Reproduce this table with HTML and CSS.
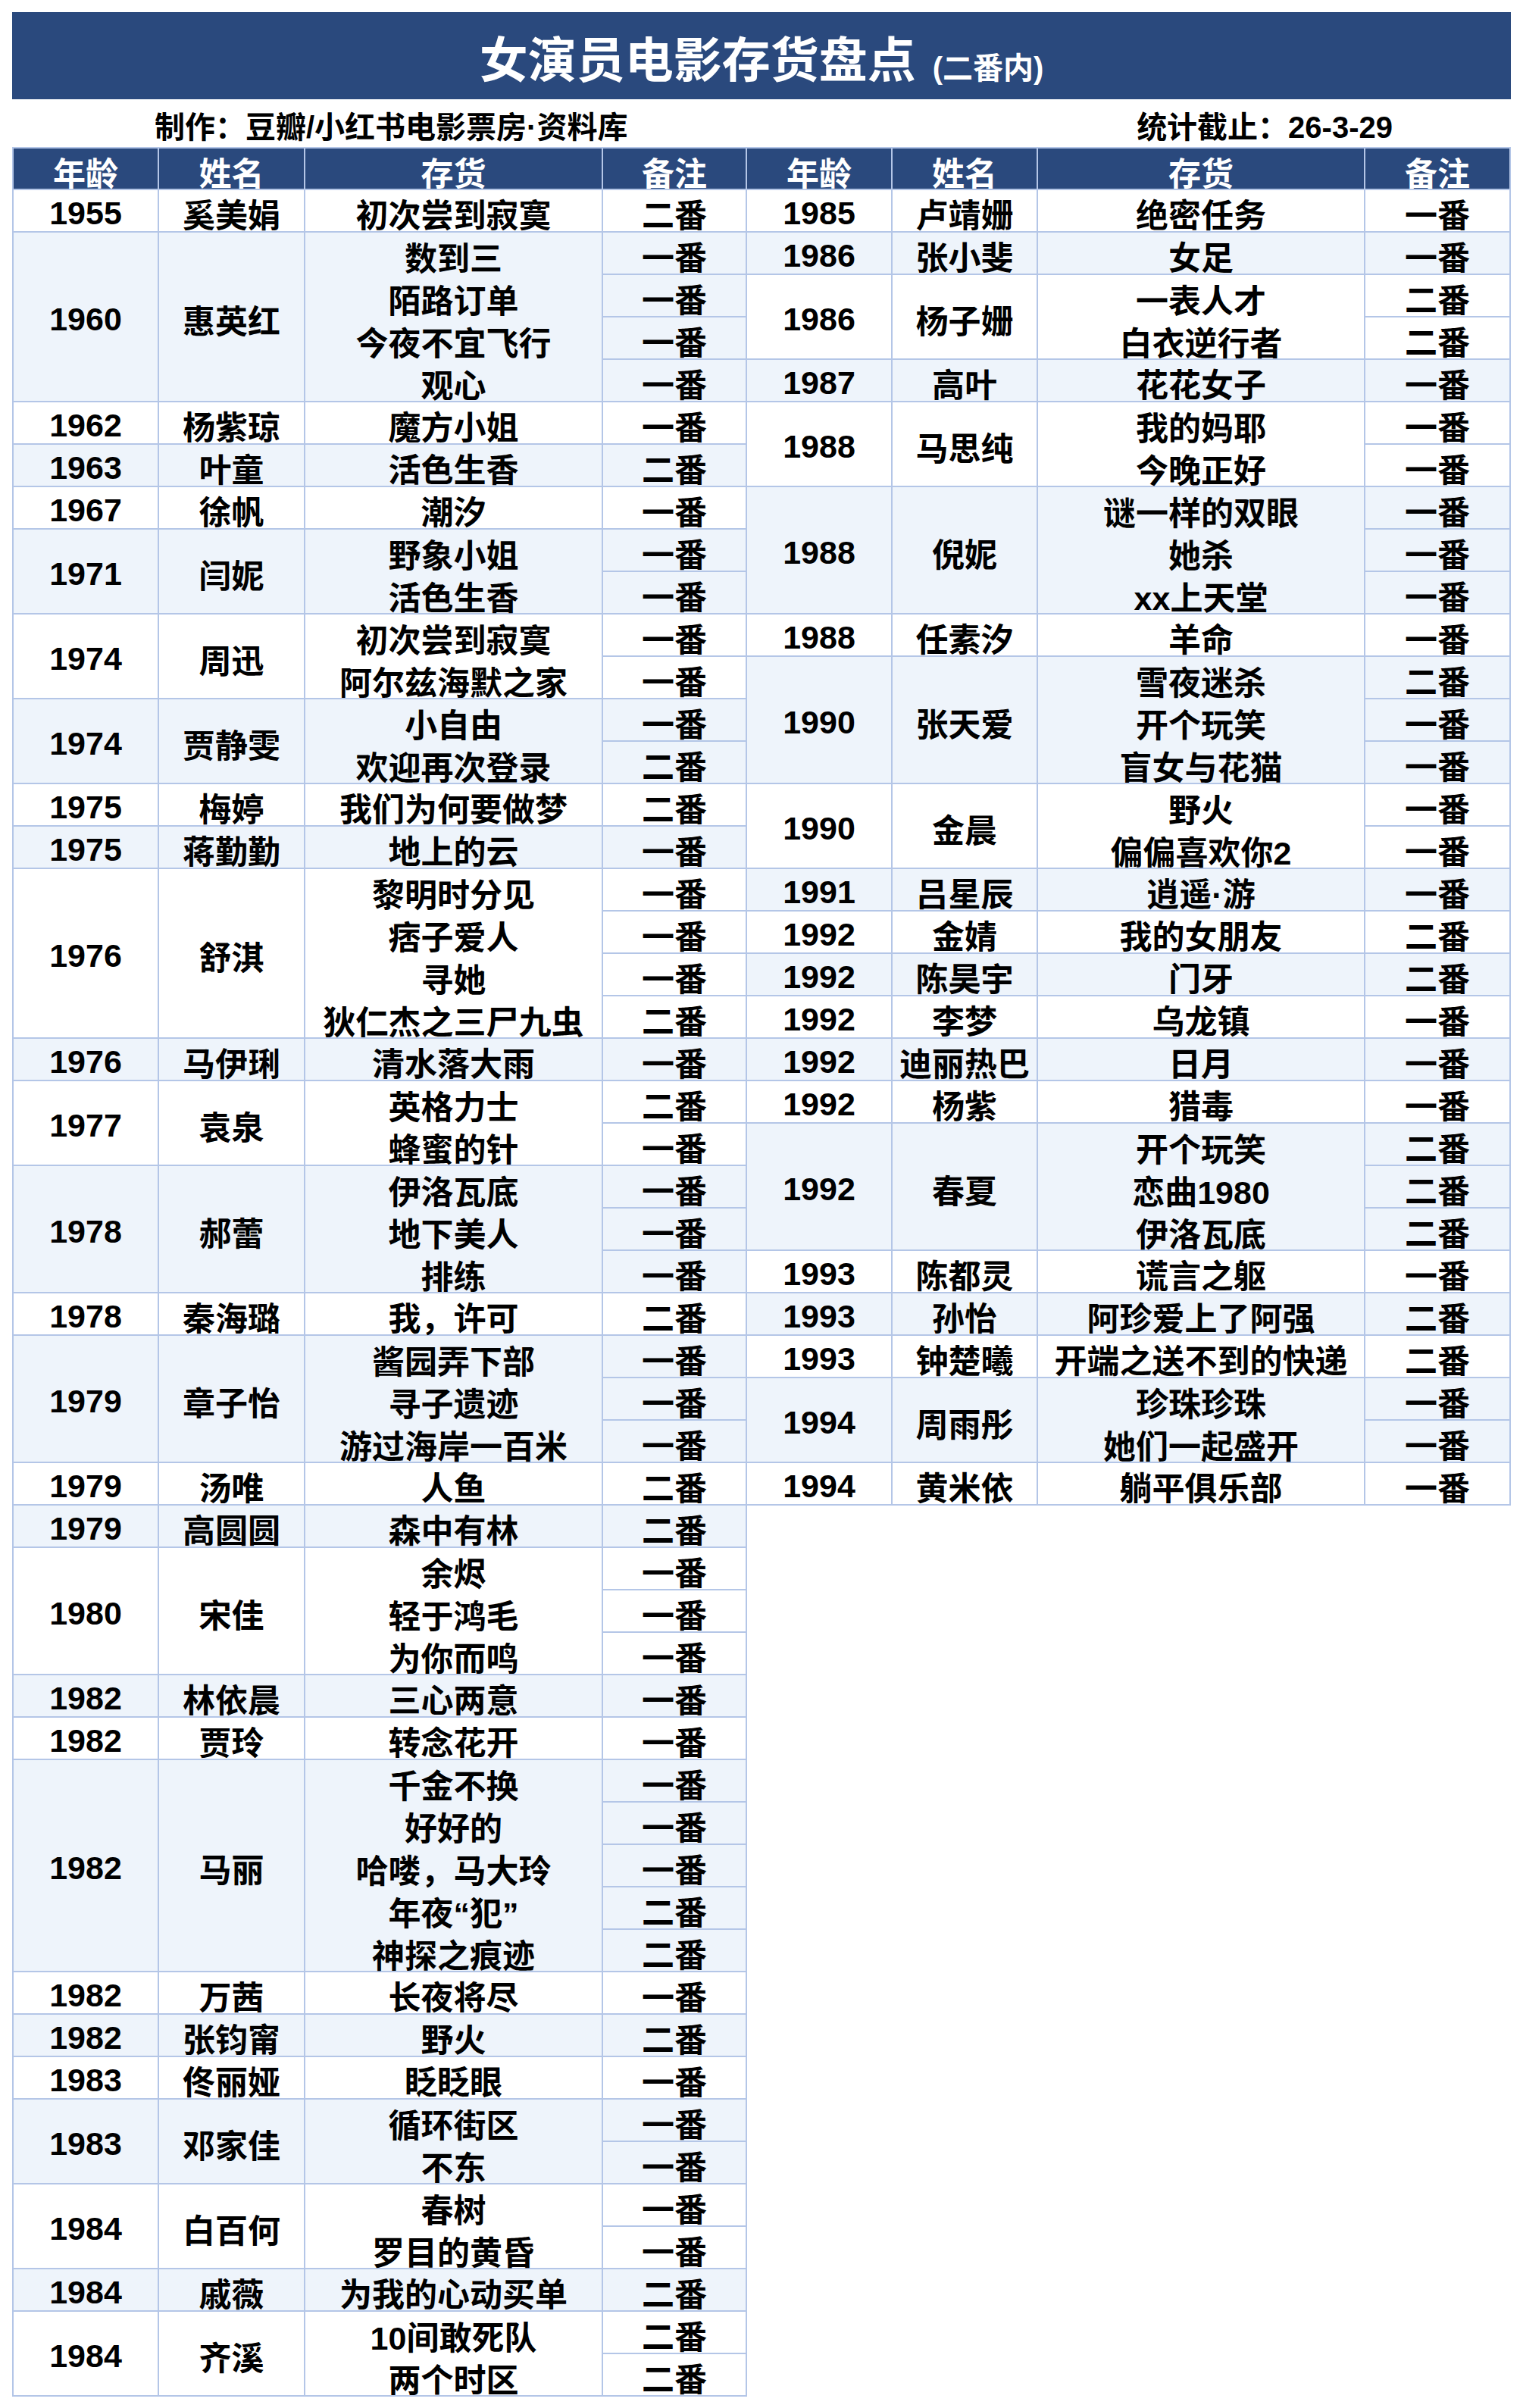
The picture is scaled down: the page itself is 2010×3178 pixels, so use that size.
FILE: index.html
```html
<!DOCTYPE html>
<html lang="zh-CN">
<head>
<meta charset="utf-8">
<title>女演员电影存货盘点</title>
<link rel="stylesheet" href="styles.css">
</head>
<body>
<div class="page">
  <div class="banner"><span class="title">女演员电影存货盘点</span><span class="title-note">(二番内)</span></div>
  <div class="sub"><span>制作：豆瓣/小红书电影票房·资料库</span><span>统计截止：26-3-29</span></div>
  <div class="tables">
    <div class="tbl left">
      <div class="cell hd">年龄</div><div class="cell hd">姓名</div><div class="cell hd">存货</div><div class="cell hd">备注</div>

      <div class="cell age">1955</div><div class="cell name">奚美娟</div><div class="cell film">初次尝到寂寞</div><div class="cell rem">二番</div>

      <div class="cell age alt r4">1960</div><div class="cell name alt r4">惠英红</div><div class="cell film multi alt r4"><div class="ln">数到三</div><div class="ln">陌路订单</div><div class="ln">今夜不宜飞行</div><div class="ln">观心</div></div><div class="cell rem alt">一番</div><div class="cell rem alt">一番</div><div class="cell rem alt">一番</div><div class="cell rem alt">一番</div>

      <div class="cell age">1962</div><div class="cell name">杨紫琼</div><div class="cell film">魔方小姐</div><div class="cell rem">一番</div>

      <div class="cell age alt">1963</div><div class="cell name alt">叶童</div><div class="cell film alt">活色生香</div><div class="cell rem alt">二番</div>

      <div class="cell age">1967</div><div class="cell name">徐帆</div><div class="cell film">潮汐</div><div class="cell rem">一番</div>

      <div class="cell age alt r2">1971</div><div class="cell name alt r2">闫妮</div><div class="cell film multi alt r2"><div class="ln">野象小姐</div><div class="ln">活色生香</div></div><div class="cell rem alt">一番</div><div class="cell rem alt">一番</div>

      <div class="cell age r2">1974</div><div class="cell name r2">周迅</div><div class="cell film multi r2"><div class="ln">初次尝到寂寞</div><div class="ln">阿尔兹海默之家</div></div><div class="cell rem">一番</div><div class="cell rem">一番</div>

      <div class="cell age alt r2">1974</div><div class="cell name alt r2">贾静雯</div><div class="cell film multi alt r2"><div class="ln">小自由</div><div class="ln">欢迎再次登录</div></div><div class="cell rem alt">一番</div><div class="cell rem alt">二番</div>

      <div class="cell age">1975</div><div class="cell name">梅婷</div><div class="cell film">我们为何要做梦</div><div class="cell rem">二番</div>

      <div class="cell age alt">1975</div><div class="cell name alt">蒋勤勤</div><div class="cell film alt">地上的云</div><div class="cell rem alt">一番</div>

      <div class="cell age r4">1976</div><div class="cell name r4">舒淇</div><div class="cell film multi r4"><div class="ln">黎明时分见</div><div class="ln">痞子爱人</div><div class="ln">寻她</div><div class="ln">狄仁杰之三尸九虫</div></div><div class="cell rem">一番</div><div class="cell rem">一番</div><div class="cell rem">一番</div><div class="cell rem">二番</div>

      <div class="cell age alt">1976</div><div class="cell name alt">马伊琍</div><div class="cell film alt">清水落大雨</div><div class="cell rem alt">一番</div>

      <div class="cell age r2">1977</div><div class="cell name r2">袁泉</div><div class="cell film multi r2"><div class="ln">英格力士</div><div class="ln">蜂蜜的针</div></div><div class="cell rem">二番</div><div class="cell rem">一番</div>

      <div class="cell age alt r3">1978</div><div class="cell name alt r3">郝蕾</div><div class="cell film multi alt r3"><div class="ln">伊洛瓦底</div><div class="ln">地下美人</div><div class="ln">排练</div></div><div class="cell rem alt">一番</div><div class="cell rem alt">一番</div><div class="cell rem alt">一番</div>

      <div class="cell age">1978</div><div class="cell name">秦海璐</div><div class="cell film">我，许可</div><div class="cell rem">二番</div>

      <div class="cell age alt r3">1979</div><div class="cell name alt r3">章子怡</div><div class="cell film multi alt r3"><div class="ln">酱园弄下部</div><div class="ln">寻子遗迹</div><div class="ln">游过海岸一百米</div></div><div class="cell rem alt">一番</div><div class="cell rem alt">一番</div><div class="cell rem alt">一番</div>

      <div class="cell age">1979</div><div class="cell name">汤唯</div><div class="cell film">人鱼</div><div class="cell rem">二番</div>

      <div class="cell age alt">1979</div><div class="cell name alt">高圆圆</div><div class="cell film alt">森中有林</div><div class="cell rem alt">二番</div>

      <div class="cell age r3">1980</div><div class="cell name r3">宋佳</div><div class="cell film multi r3"><div class="ln">余烬</div><div class="ln">轻于鸿毛</div><div class="ln">为你而鸣</div></div><div class="cell rem">一番</div><div class="cell rem">一番</div><div class="cell rem">一番</div>

      <div class="cell age alt">1982</div><div class="cell name alt">林依晨</div><div class="cell film alt">三心两意</div><div class="cell rem alt">一番</div>

      <div class="cell age">1982</div><div class="cell name">贾玲</div><div class="cell film">转念花开</div><div class="cell rem">一番</div>

      <div class="cell age alt r5">1982</div><div class="cell name alt r5">马丽</div><div class="cell film multi alt r5"><div class="ln">千金不换</div><div class="ln">好好的</div><div class="ln">哈喽，马大玲</div><div class="ln">年夜“犯”</div><div class="ln">神探之痕迹</div></div><div class="cell rem alt">一番</div><div class="cell rem alt">一番</div><div class="cell rem alt">一番</div><div class="cell rem alt">二番</div><div class="cell rem alt">二番</div>

      <div class="cell age">1982</div><div class="cell name">万茜</div><div class="cell film">长夜将尽</div><div class="cell rem">一番</div>

      <div class="cell age alt">1982</div><div class="cell name alt">张钧甯</div><div class="cell film alt">野火</div><div class="cell rem alt">二番</div>

      <div class="cell age">1983</div><div class="cell name">佟丽娅</div><div class="cell film">眨眨眼</div><div class="cell rem">一番</div>

      <div class="cell age alt r2">1983</div><div class="cell name alt r2">邓家佳</div><div class="cell film multi alt r2"><div class="ln">循环街区</div><div class="ln">不东</div></div><div class="cell rem alt">一番</div><div class="cell rem alt">一番</div>

      <div class="cell age r2">1984</div><div class="cell name r2">白百何</div><div class="cell film multi r2"><div class="ln">春树</div><div class="ln">罗目的黄昏</div></div><div class="cell rem">一番</div><div class="cell rem">一番</div>

      <div class="cell age alt">1984</div><div class="cell name alt">戚薇</div><div class="cell film alt">为我的心动买单</div><div class="cell rem alt">二番</div>

      <div class="cell age r2">1984</div><div class="cell name r2">齐溪</div><div class="cell film multi r2"><div class="ln">10间敢死队</div><div class="ln">两个时区</div></div><div class="cell rem">二番</div><div class="cell rem">二番</div>
    </div>

    <div class="tbl right">
      <div class="cell hd">年龄</div><div class="cell hd">姓名</div><div class="cell hd">存货</div><div class="cell hd">备注</div>

      <div class="cell age">1985</div><div class="cell name">卢靖姗</div><div class="cell film">绝密任务</div><div class="cell rem">一番</div>

      <div class="cell age alt">1986</div><div class="cell name alt">张小斐</div><div class="cell film alt">女足</div><div class="cell rem alt">一番</div>

      <div class="cell age r2">1986</div><div class="cell name r2">杨子姗</div><div class="cell film multi r2"><div class="ln">一表人才</div><div class="ln">白衣逆行者</div></div><div class="cell rem">二番</div><div class="cell rem">二番</div>

      <div class="cell age alt">1987</div><div class="cell name alt">高叶</div><div class="cell film alt">花花女子</div><div class="cell rem alt">一番</div>

      <div class="cell age r2">1988</div><div class="cell name r2">马思纯</div><div class="cell film multi r2"><div class="ln">我的妈耶</div><div class="ln">今晚正好</div></div><div class="cell rem">一番</div><div class="cell rem">一番</div>

      <div class="cell age alt r3">1988</div><div class="cell name alt r3">倪妮</div><div class="cell film multi alt r3"><div class="ln">谜一样的双眼</div><div class="ln">她杀</div><div class="ln">xx上天堂</div></div><div class="cell rem alt">一番</div><div class="cell rem alt">一番</div><div class="cell rem alt">一番</div>

      <div class="cell age">1988</div><div class="cell name">任素汐</div><div class="cell film">羊命</div><div class="cell rem">一番</div>

      <div class="cell age alt r3">1990</div><div class="cell name alt r3">张天爱</div><div class="cell film multi alt r3"><div class="ln">雪夜迷杀</div><div class="ln">开个玩笑</div><div class="ln">盲女与花猫</div></div><div class="cell rem alt">二番</div><div class="cell rem alt">一番</div><div class="cell rem alt">一番</div>

      <div class="cell age r2">1990</div><div class="cell name r2">金晨</div><div class="cell film multi r2"><div class="ln">野火</div><div class="ln">偏偏喜欢你2</div></div><div class="cell rem">一番</div><div class="cell rem">一番</div>

      <div class="cell age alt">1991</div><div class="cell name alt">吕星辰</div><div class="cell film alt">逍遥·游</div><div class="cell rem alt">一番</div>

      <div class="cell age">1992</div><div class="cell name">金婧</div><div class="cell film">我的女朋友</div><div class="cell rem">二番</div>

      <div class="cell age alt">1992</div><div class="cell name alt">陈昊宇</div><div class="cell film alt">门牙</div><div class="cell rem alt">二番</div>

      <div class="cell age">1992</div><div class="cell name">李梦</div><div class="cell film">乌龙镇</div><div class="cell rem">一番</div>

      <div class="cell age alt">1992</div><div class="cell name alt">迪丽热巴</div><div class="cell film alt">日月</div><div class="cell rem alt">一番</div>

      <div class="cell age">1992</div><div class="cell name">杨紫</div><div class="cell film">猎毒</div><div class="cell rem">一番</div>

      <div class="cell age alt r3">1992</div><div class="cell name alt r3">春夏</div><div class="cell film multi alt r3"><div class="ln">开个玩笑</div><div class="ln">恋曲1980</div><div class="ln">伊洛瓦底</div></div><div class="cell rem alt">二番</div><div class="cell rem alt">二番</div><div class="cell rem alt">二番</div>

      <div class="cell age">1993</div><div class="cell name">陈都灵</div><div class="cell film">谎言之躯</div><div class="cell rem">一番</div>

      <div class="cell age alt">1993</div><div class="cell name alt">孙怡</div><div class="cell film alt">阿珍爱上了阿强</div><div class="cell rem alt">二番</div>

      <div class="cell age">1993</div><div class="cell name">钟楚曦</div><div class="cell film">开端之送不到的快递</div><div class="cell rem">二番</div>

      <div class="cell age alt r2">1994</div><div class="cell name alt r2">周雨彤</div><div class="cell film multi alt r2"><div class="ln">珍珠珍珠</div><div class="ln">她们一起盛开</div></div><div class="cell rem alt">一番</div><div class="cell rem alt">一番</div>

      <div class="cell age">1994</div><div class="cell name">黄米依</div><div class="cell film">躺平俱乐部</div><div class="cell rem">一番</div>
    </div>
  </div>
</div>
</body>
</html>
```

FILE: styles.css
```css
html, body {
  margin: 0;
  padding: 0;
  background: #ffffff;
}

body {
  font-family: "Liberation Sans", "Noto Sans CJK SC", sans-serif;
  color: #000000;
}

.page {
  width: 1978px;
  padding: 16px 16px 0 16px;
}

.banner {
  height: 115px;
  box-sizing: border-box;
  padding-top: 12px;
  background: #2a497d;
  color: #ffffff;
  display: flex;
  align-items: center;
  justify-content: center;
  font-weight: bold;
}

.title {
  font-size: 64px;
  line-height: 1;
}

.title-note {
  font-size: 40px;
  margin-left: 22px;
  margin-top: 20px;
  line-height: 1;
}

.sub {
  height: 63px;
  box-sizing: border-box;
  display: flex;
  justify-content: space-between;
  align-items: center;
  padding: 4px 156px 0 188px;
  font-size: 40px;
  font-weight: bold;
}

.tables {
  display: flex;
  align-items: flex-start;
}

.tbl {
  display: grid;
  gap: 2px;
  padding: 2px;
  background: #b4c6e7;
  grid-template-rows: 53px;
  grid-auto-rows: 54px;
}

.left {
  grid-template-columns: 190px 191px 391px 188px;
}

.right {
  padding-left: 0;
  grid-template-columns: 190px 190px 430px 190px;
}

.cell {
  display: flex;
  align-items: center;
  justify-content: center;
  box-sizing: border-box;
  padding-top: 6px;
  background: #ffffff;
  font-size: 43px;
  font-weight: bold;
  white-space: nowrap;
}

.hd {
  background: #2a497d;
  color: #ffffff;
}

.alt {
  background: #eef4fb;
}

.age { grid-column: 1; }
.name { grid-column: 2; }
.film { grid-column: 3; }
.rem { grid-column: 4; }

.r2 { grid-row: span 2; }
.r3 { grid-row: span 3; }
.r4 { grid-row: span 4; }
.r5 { grid-row: span 5; }

.film.multi {
  flex-direction: column;
  justify-content: flex-start;
  padding-top: 0;
}

.ln {
  flex: none;
  height: 56px;
  box-sizing: border-box;
  padding-top: 6px;
  display: flex;
  align-items: center;
  justify-content: center;
}
```
